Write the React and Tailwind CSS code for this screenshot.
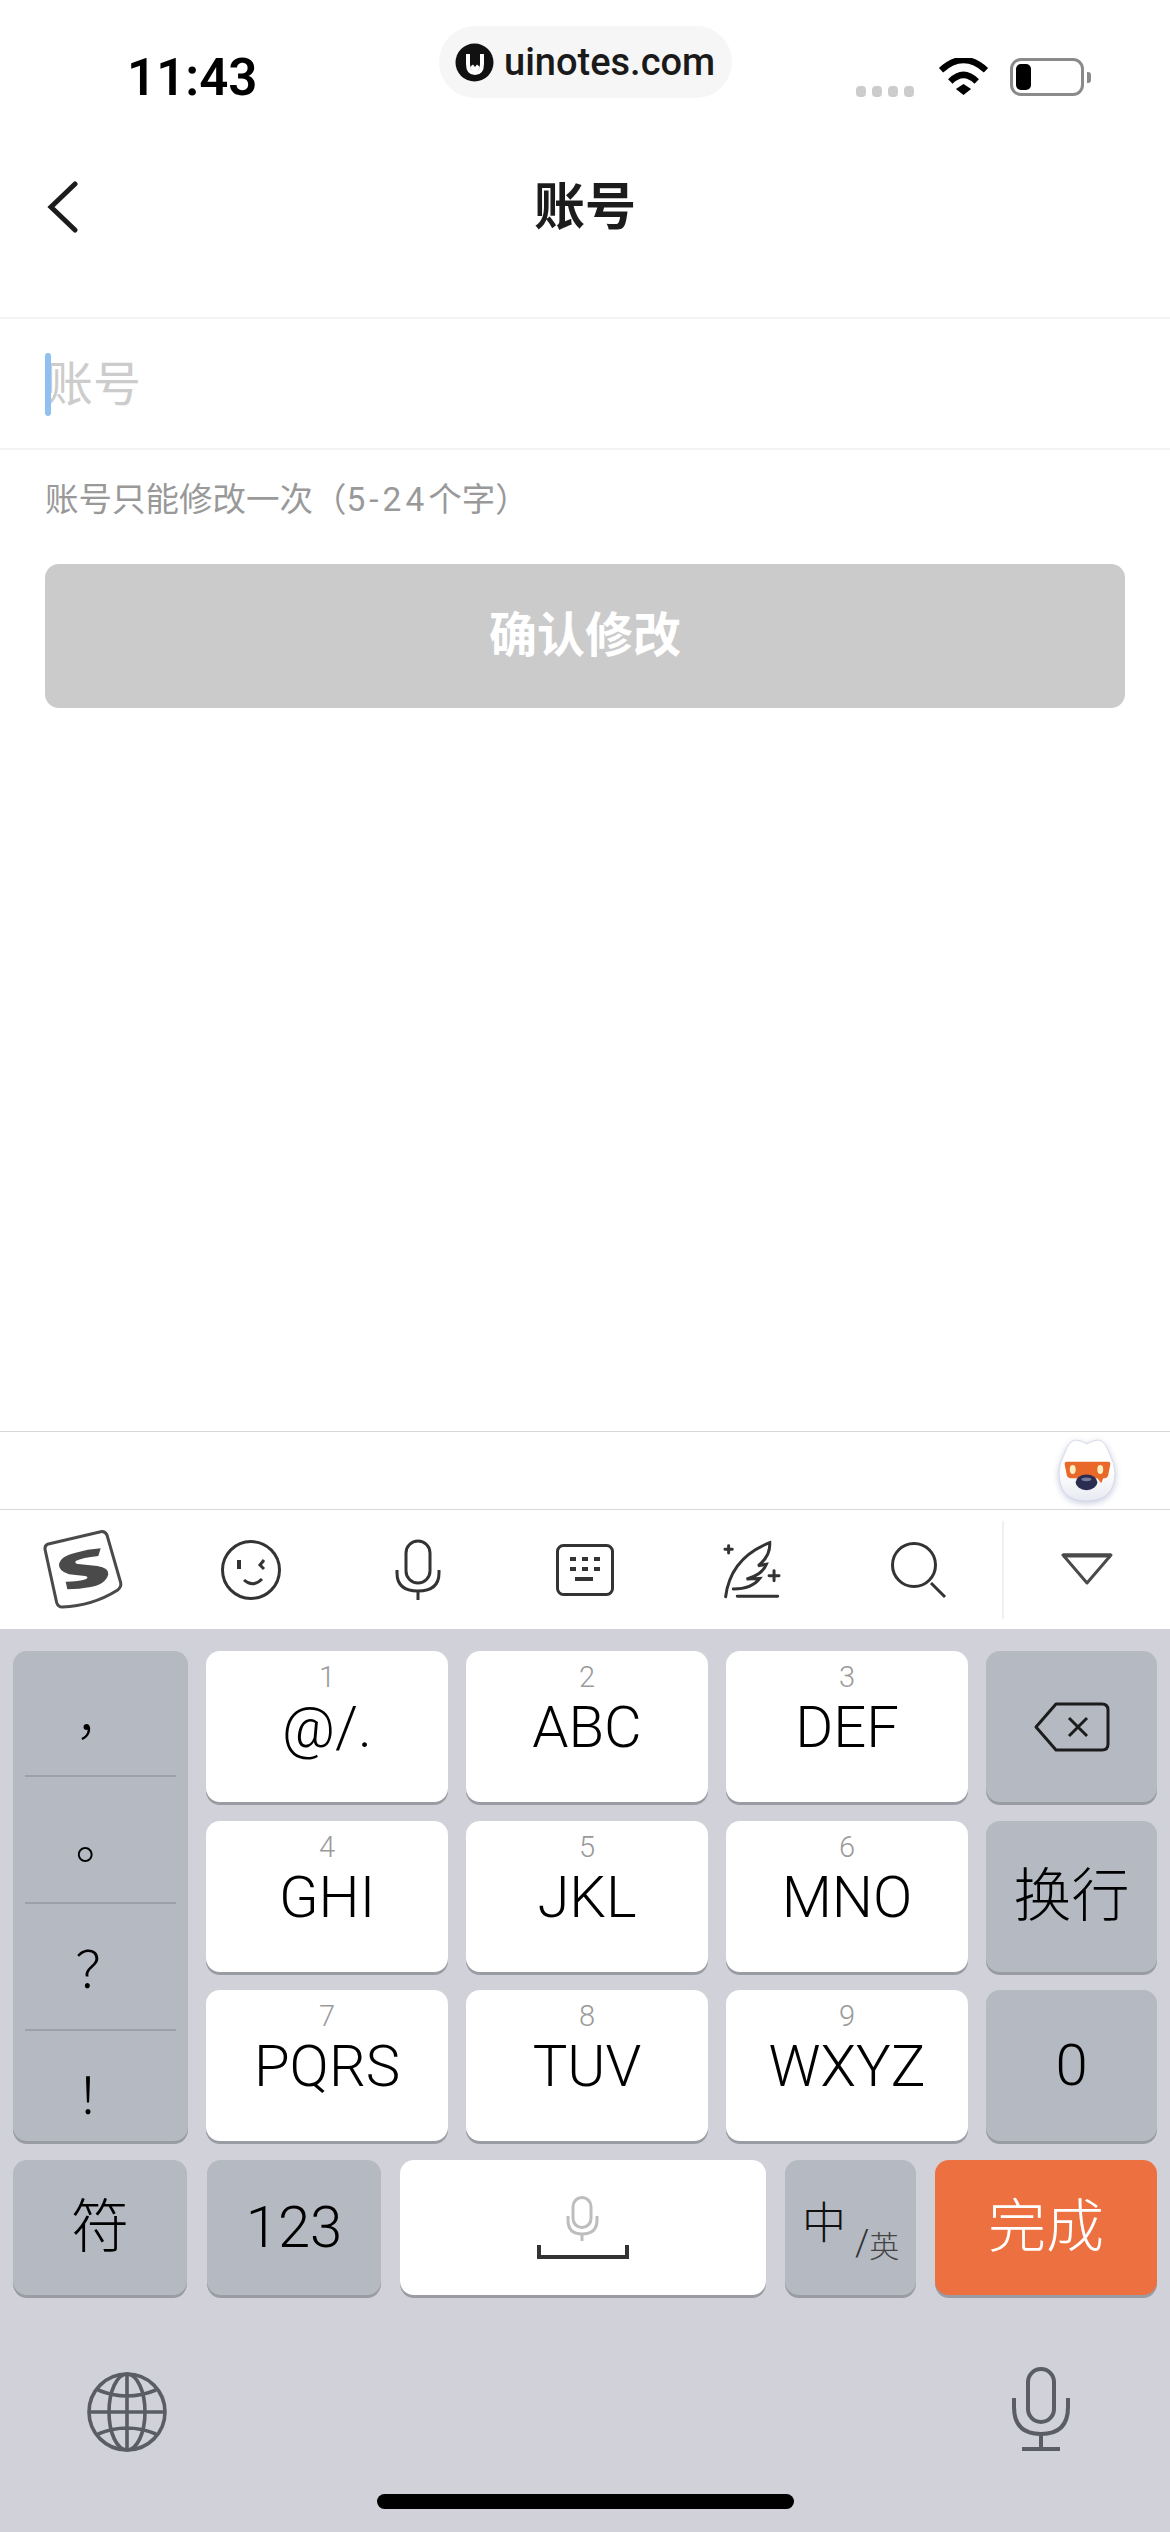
const cjk = "font-['Roboto','Noto_Sans_CJK_SC',sans-serif]";

const rows = [
  [['1', '@/.'], ['2', 'ABC'], ['3', 'DEF']],
  [['4', 'GHI'], ['5', 'JKL'], ['6', 'MNO']],
  [['7', 'PQRS'], ['8', 'TUV'], ['9', 'WXYZ']],
];

// grey function key
function GreyKey({ className = '', children }) {
  return (
    <div className={`flex items-center justify-center rounded-[14px] bg-[#b5b9c2] shadow-[0_3px_0_#999ca3] ${className}`}>
      {children}
    </div>
  );
}

function LetterKey({ num, text }) {
  return (
    <div className="flex flex-col items-center rounded-[14px] bg-white pt-[9px] shadow-[0_3px_0_#999ca3]">
      <span className="h-[34px] text-[29px] leading-[34px] font-light text-[#9a9a9a]">{num}</span>
      <span className="h-[66px] text-[58px] leading-[66px] font-light text-black">{text}</span>
    </div>
  );
}

function Logo() {
  return (
    <svg width="39" height="39" viewBox="0 0 39 39">
      <circle cx="19.5" cy="19.5" r="19" fill="#111" />
      <path d="M13 11V21Q13 30 20 30Q27 30 27 21V11" fill="none" stroke="#fff" strokeWidth="4" />
      <path d="M15 24L18 21.5L20 24L22 21.5L25 24L22 29H18Z" fill="#fff" />
    </svg>
  );
}

function Wifi() {
  return (
    <svg width="53" height="38" viewBox="255 25 160 115">
      <path d="M267 62Q335 0 403 62" fill="none" stroke="#000" strokeWidth="19" />
      <path d="M295 96Q335 56 375 96" fill="none" stroke="#000" strokeWidth="19" />
      <path d="M335 104L358 119L335 137L312 119Z" fill="#000" />
    </svg>
  );
}

function SogouLogo() {
  return (
    <svg width="82" height="82" viewBox="72 54 246 246" fill="none">
      <path d="M85 100L245 62Q258 60 264 72L305 215Q308 228 295 238Q220 285 130 288Q118 288 113 275L78 115Q77 104 85 100Z" stroke="#4a4a4a" strokeWidth="9" />
      <path d="M245 112L238 135Q190 140 170 150Q165 160 185 160L235 165Q270 170 268 190Q260 220 215 228Q180 235 145 235L140 212Q180 212 200 205Q212 198 198 195L150 190Q118 180 120 160Q125 135 170 125Q205 115 245 112Z" fill="#4a4a4a" />
    </svg>
  );
}

function Smile() {
  return (
    <svg width="62" height="62" viewBox="0 0 62 62" fill="none" stroke="#333" strokeWidth="3">
      <circle cx="31" cy="31" r="28.5" />
      <path d="M19 21V30" strokeWidth="4" />
      <path d="M44 21L40 26L44 30" />
      <path d="M24 41Q33 49 42 40" />
    </svg>
  );
}

function ToolbarMic() {
  return (
    <svg width="46" height="62" viewBox="0 0 46 62" fill="none" stroke="#333" strokeWidth="3">
      <rect x="11" y="2" width="24" height="42" rx="12" />
      <path d="M2 31V34Q2 52 23 52Q44 52 44 34V31" />
      <path d="M23 52V61" />
    </svg>
  );
}

function KeyboardIcon() {
  return (
    <svg width="58" height="52" viewBox="0 0 58 52" fill="none">
      <rect x="1.5" y="1.5" width="55" height="49" rx="6" stroke="#333" strokeWidth="3" />
      <g fill="#333">
        <rect x="14" y="13" width="6" height="4" />
        <rect x="26" y="13" width="6" height="4" />
        <rect x="38" y="13" width="6" height="4" />
        <rect x="14" y="23" width="6" height="4" />
        <rect x="26" y="23" width="6" height="4" />
        <rect x="38" y="23" width="6" height="4" />
        <rect x="19" y="33" width="18" height="4" />
      </g>
    </svg>
  );
}

function Feather() {
  return (
    <svg width="63" height="62" viewBox="540 40 190 185" fill="none" stroke="#333" strokeWidth="9" strokeLinecap="round">
      <path d="M557 213C565 150 600 85 690 50C692 80 680 100 655 120L680 115C670 140 650 150 620 160L660 158C640 185 610 190 580 190" />
      <path d="M555 70H577M566 59V81M688 150H718M703 135V165M592 212H714" />
    </svg>
  );
}

function SearchIcon() {
  return (
    <svg width="58" height="58" viewBox="0 0 58 58" fill="none" stroke="#333" strokeWidth="3">
      <circle cx="24" cy="24" r="21.5" />
      <path d="M41 42L55 56" />
    </svg>
  );
}

function Mascot() {
  return (
    <svg width="58" height="64" viewBox="-1 -1 59 65" className="drop-shadow-[0_2px_3px_#c8cce0]">
      <defs>
        <linearGradient id="egg" x1="0" y1="0" x2="0" y2="1">
          <stop offset="0.5" stopColor="#ffffff" />
          <stop offset="1" stopColor="#e8eaf2" />
        </linearGradient>
      </defs>
      <path d="M28 4Q35 0 40 0Q47 1 51 13Q57 24 57 33Q57 62 28 62Q0 62 0 33Q0 24 6 13Q10 1 17 0Q22 0 28 4Z" fill="url(#egg)" stroke="#d5d8e8" />
      <path d="M8 22H50Q53 22 52 26L50 36Q49 39 45 39L43 44L39 39H14Q9 39 8 36L6 26Q5 22 8 22Z" fill="#e8692a" />
      <ellipse cx="14" cy="30" rx="3" ry="4.5" fill="#ffefc0" />
      <ellipse cx="42" cy="30" rx="3" ry="4.5" fill="#ffefc0" />
      <ellipse cx="28" cy="43" rx="11" ry="8" fill="#2a2d50" />
      <ellipse cx="28" cy="40" rx="5" ry="2" fill="#777b9a" />
    </svg>
  );
}

function Globe() {
  return (
    <svg width="80" height="80" viewBox="-40 -40 80 80" fill="none" stroke="#5a5d63" strokeWidth="3.6">
      <circle r="38" />
      <ellipse rx="18" ry="38" />
      <path d="M-38 0H38M0 -38V38M-29 -22Q0 -10 29 -22M-29 22Q0 10 29 22" />
    </svg>
  );
}

function BottomMic() {
  return (
    <svg width="58" height="84" viewBox="0 0 58 84" fill="none" stroke="#5a5d63" strokeWidth="4">
      <rect x="16" y="2" width="26" height="53" rx="13" />
      <path d="M2 31V40Q2 67 29 67Q56 67 56 40V31" />
      <path d="M29 67V80" />
      <rect x="10" y="80" width="38" height="4" fill="#5a5d63" stroke="none" />
    </svg>
  );
}

export default function App() {
  return (
    <div className={`flex h-[2532px] w-[1170px] flex-col overflow-hidden bg-white ${cjk}`}>
      {/* status bar */}
      <div className="flex h-[98px] items-start pt-[26px]">
        <div className="mt-[26px] ml-[127px] w-[312px] text-[51px] leading-[52px] font-semibold text-black">11:43</div>
        <div className="flex h-[72px] w-[293px] items-center rounded-[36px] bg-[#f6f6f6] pl-[16px]">
          <Logo />
          <span className="ml-[10px] text-[38px] font-medium text-[#1a1a1a]">uinotes.com</span>
        </div>
        <div className="mt-[32px] ml-[124px] flex h-[38px] items-end">
          <div className="mb-[-1px] flex gap-[6px]">
            <div className="h-[11px] w-[10px] rounded-[4px] bg-[#cccccc]" />
            <div className="h-[11px] w-[10px] rounded-[4px] bg-[#cccccc]" />
            <div className="h-[11px] w-[10px] rounded-[4px] bg-[#cccccc]" />
            <div className="h-[11px] w-[10px] rounded-[4px] bg-[#cccccc]" />
          </div>
          <div className="ml-[23px]">
            <Wifi />
          </div>
          <div className="ml-[20px] flex items-center">
            <div className="h-[38px] w-[74px] rounded-[11px] border-[3px] border-[#8a8a8a] p-[3px]">
              <div className="h-full w-[15px] rounded-[5px] bg-black" />
            </div>
            <div className="ml-[3px] h-[11px] w-[4px] rounded-r-[3px] bg-[#8a8a8a]" />
          </div>
        </div>
      </div>

      {/* nav */}
      <div className="grid h-[221px] grid-cols-3 items-center border-b-2 border-[#f3f3f3] pb-[2px]">
        <svg width="34" height="52" viewBox="0 0 34 52" fill="none" stroke="#1c1c1c" strokeWidth="5" strokeLinecap="round" className="ml-[46px]">
          <path d="M29 3L5 26L29 49" />
        </svg>
        <div className="mt-[3px] text-center text-[51px] font-bold text-[#1c1c1c]">账号</div>
      </div>

      {/* input */}
      <div className="flex h-[131px] items-center border-b-2 border-[#f3f3f3] pt-[2px] pl-[45px]">
        <div className="relative text-[48px] text-[#cccccc]">
          账号
          <div className="absolute top-[4px] left-0 h-[63px] w-[6px] rounded-full bg-[#90c0f0]" />
        </div>
      </div>

      <div className="mt-[28px] ml-[45px] text-[33.5px] leading-[44px] text-[#999999]">
        账号只能修改一次（<span className="tracking-[4px]">5-24</span>个字）
      </div>

      <div className="mx-[45px] mt-[42px] flex h-[144px] items-center justify-center rounded-[14px] bg-[#cbcbcb] text-[48px] font-bold text-white">
        确认修改
      </div>

      <div className="flex-1" />

      {/* suggestion strip */}
      <div className="flex h-[78px] items-center justify-end border-t border-[#d8d8d8] pr-[54px]">
        <Mascot />
      </div>

      {/* keyboard toolbar */}
      <div className="flex h-[120px] items-center border-t border-[#d8d8d8]">
        <div className="flex w-[167px] justify-center"><SogouLogo /></div>
        <div className="flex w-[167px] justify-center"><Smile /></div>
        <div className="flex w-[167px] justify-center"><ToolbarMic /></div>
        <div className="flex w-[167px] justify-center"><KeyboardIcon /></div>
        <div className="flex w-[167px] justify-center"><Feather /></div>
        <div className="flex w-[167px] justify-center"><SearchIcon /></div>
        <div className="flex h-[98px] w-[168px] items-center justify-center border-l-2 border-[#f0f0f0] pb-[2px]">
          <svg width="54" height="33" viewBox="0 0 54 33" fill="none" stroke="#4a4a4a" strokeWidth="3" strokeLinejoin="round">
            <path d="M3 3H51L27 31Z" />
            <path d="M3 3.5H51" strokeWidth="4" />
          </svg>
        </div>
      </div>

      {/* keyboard */}
      <div className="flex h-[903px] flex-col bg-[#d0d1d9] px-[13px] pt-[22px]">
        <div className="grid grid-cols-[175px_242px_242px_242px_171px] grid-rows-[151px_151px_151px] gap-x-[18px] gap-y-[18.5px]">
          <GreyKey className="row-span-3 flex-col !justify-start px-[12px] text-[50px] font-light text-black">
            <div className="flex h-[126px] w-full items-center justify-center border-b-2 border-[#9da0a8] pt-[10px]">，</div>
            <div className="flex h-[127px] w-full items-center justify-center border-b-2 border-[#9da0a8] pt-[6px]">。</div>
            <div className="flex h-[127px] w-full items-center justify-center border-b-2 border-[#9da0a8] pt-[10px]">？</div>
            <div className="flex h-[110px] w-full items-center justify-center pt-[22px]">！</div>
          </GreyKey>
          {rows[0].map(([n, t]) => <LetterKey key={n} num={n} text={t} />)}
          <GreyKey>
            <svg width="76" height="50" viewBox="0 0 76 50" fill="none" stroke="#1c1c1c" strokeWidth="3" strokeLinejoin="round">
              <path d="M22 2H68Q74 2 74 8V42Q74 48 68 48H22L2 25Z" />
              <path d="M35 16L53 34M53 16L35 34" />
            </svg>
          </GreyKey>
          {rows[1].map(([n, t]) => <LetterKey key={n} num={n} text={t} />)}
          <GreyKey className="text-[58px] font-light text-black">换行</GreyKey>
          {rows[2].map(([n, t]) => <LetterKey key={n} num={n} text={t} />)}
          <GreyKey className="text-[58px] font-light text-black">0</GreyKey>
        </div>

        <div className="mt-[19px] flex h-[135px] gap-[19px]">
          <GreyKey className="w-[174px] text-[58px] font-light text-black">符</GreyKey>
          <GreyKey className="ml-[1px] w-[174px] text-[58px] font-light text-black">123</GreyKey>
          <div className="flex w-[366px] flex-col items-center justify-center rounded-[14px] bg-white shadow-[0_3px_0_#999ca3]">
            <svg width="92" height="64" viewBox="0 0 92 64" fill="none">
              <rect x="36" y="1.5" width="18" height="30" rx="9" stroke="#bdbdbd" strokeWidth="3" />
              <path d="M31 20V24Q31 38 45 38Q60 38 60 24V20M45 38V45" stroke="#bdbdbd" strokeWidth="3" />
              <path d="M2 49V61H90V49" stroke="#333" strokeWidth="4" />
            </svg>
          </div>
          <GreyKey className="w-[131px] !justify-start pl-[17px] font-light">
            <span className="mb-[8px] text-[44px] leading-none text-[#111]">中</span>
            <span className="mt-[30px] ml-[9px] text-[36px] leading-none text-[#333]">/</span>
            <span className="mt-[38px] text-[30px] leading-none text-[#444]">英</span>
          </GreyKey>
          <div className="flex w-[222px] items-center justify-center rounded-[14px] bg-[#ec7040] text-[58px] font-light text-white shadow-[0_3px_0_#999ca3]">
            完成
          </div>
        </div>

        <div className="mt-[72px] flex items-start justify-between pr-[87px] pl-[74px]">
          <div className="mt-[5px]"><Globe /></div>
          <BottomMic />
        </div>

        <div className="mt-[42px] h-[15px] w-[417px] self-center rounded-full bg-black" />
      </div>
    </div>
  );
}
